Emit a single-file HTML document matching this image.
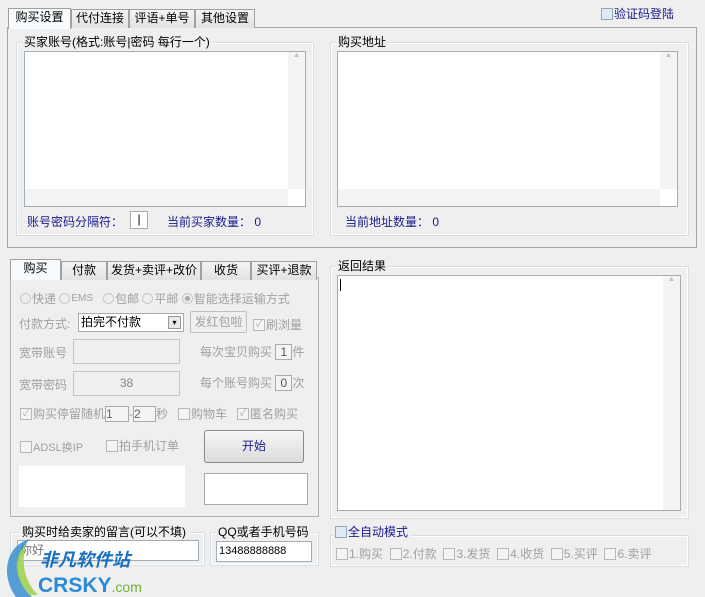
<!DOCTYPE html>
<html><head><meta charset="utf-8"><style>
*{box-sizing:border-box;margin:0;padding:0}
body{width:705px;height:597px;background:#efefef;font-family:"Liberation Sans","Noto Sans CJK SC","WenQuanYi Zen Hei",sans-serif;font-size:12px;color:#000;position:relative;overflow:hidden}
.a{position:absolute;white-space:nowrap}
.tab{position:absolute;height:19px;border:1px solid #a0a0a0;border-bottom:none;background:linear-gradient(#f4f4f4,#e2e2e2);text-align:center;line-height:17px;font-size:12px}
.tab.sel{background:#f8fbfd;height:21px}
.pan{position:absolute;border:1px solid #a4a4a4;background:#efefef}
.grp{position:absolute;border:1px solid #d5dfe5;box-shadow:inset 0 0 0 1px #fff}
.lg{position:absolute;background:#efefef;padding:0 2px;line-height:12px}
.ta{position:absolute;background:#fff;border:1px solid #a5acb5}
.vs{position:absolute;right:0;top:0;width:17px;background:#f4f4f4;color:#bbb;font-size:7px;text-align:center}
.hs{position:absolute;left:0;bottom:0;height:17px;background:#f4f4f4;color:#bbb;font-size:7px}
.box{position:absolute;background:#fff;border:1px solid #a5acb5}
.dis{position:absolute;background:#efefef;border:1px solid #c0c6cc}
.g{color:#a0a0a0}
.b{color:#1a1a8c}
.row{display:flex;align-items:center}
.cb{display:inline-block;width:12px;height:12px;border:1px solid #b8b8b8;background:#f4f4f4;margin-right:1px;font-size:10px;line-height:10px;text-align:center;color:#b0b0b0;flex:none}
.rd{display:inline-block;width:11px;height:11px;border:1px solid #c8c8c8;border-radius:50%;background:#eee;margin-right:1px;flex:none}
</style></head><body>

<div class="pan" style="left:7px;top:27px;width:690px;height:221px"></div>
<div class="tab" style="left:71px;top:9px;width:58px">代付连接</div>
<div class="tab" style="left:129px;top:9px;width:66px">评语+单号</div>
<div class="tab" style="left:195px;top:9px;width:60px">其他设置</div>
<div class="tab sel" style="left:8px;top:8px;width:63px">购买设置</div>

<div class="a row" style="left:601px;top:5px"><span class="cb" style="border-color:#8ea8c0;background:#dfe9f3"></span><span class="b">验证码登陆</span></div>

<div class="grp" style="left:16px;top:42px;width:298px;height:194px"></div>
<div class="lg" style="left:22px;top:36px">买家账号(格式:账号|密码 每行一个)</div>
<div class="ta" style="left:24px;top:51px;width:282px;height:156px"><div class="vs" style="height:137px">▲</div><div class="hs" style="width:263px"></div></div>
<div class="a b" style="left:27px;top:213px">账号密码分隔符：</div>
<div class="box" style="left:130px;top:211px;width:18px;height:18px;text-align:center;line-height:15px">|</div>
<div class="a b" style="left:167px;top:213px">当前买家数量： 0</div>

<div class="grp" style="left:330px;top:42px;width:359px;height:194px"></div>
<div class="lg" style="left:336px;top:36px">购买地址</div>
<div class="ta" style="left:337px;top:51px;width:341px;height:156px"><div class="vs" style="height:137px">▲</div><div class="hs" style="width:322px"></div></div>
<div class="a b" style="left:345px;top:213px">当前地址数量： 0</div>

<!-- lower left -->
<div class="pan" style="left:10px;top:277px;width:309px;height:240px;border-color:#b0b0b0"></div>
<div class="tab" style="left:61px;top:261px;width:46px">付款</div>
<div class="tab" style="left:107px;top:261px;width:94px">发货+卖评+改价</div>
<div class="tab" style="left:201px;top:261px;width:50px">收货</div>
<div class="tab" style="left:251px;top:261px;width:66px">买评+退款</div>
<div class="tab sel" style="left:10px;top:259px;width:51px">购买</div>

<div class="a g row" style="left:20px;top:290px"><span class="rd"></span>快递&nbsp;<span class="rd"></span><span style="font-size:10px">EMS</span>&nbsp;&nbsp;&nbsp;<span class="rd"></span>包邮&nbsp;<span class="rd"></span>平邮&nbsp;<span class="rd" style="background:radial-gradient(#aaa 35%,#eee 45%)"></span>智能选择运输方式</div>
<div class="a g" style="left:19px;top:315px">付款方式:</div>
<div class="box" style="left:78px;top:313px;width:106px;height:19px;padding-left:2px;line-height:16px">拍完不付款<div style="position:absolute;right:2px;top:2px;width:13px;height:13px;border:1px solid #999;background:#e8e8e8;font-size:8px;text-align:center;line-height:11px">▾</div></div>
<div class="a g" style="left:190px;top:311px;width:57px;height:22px;border:1px solid #c0c0c0;border-radius:2px;text-align:center;line-height:20px">发红包啦</div>
<div class="a g row" style="left:253px;top:316px"><span class="cb">✓</span>刷浏量</div>
<div class="a g" style="left:19px;top:344px">宽带账号</div>
<div class="dis" style="left:73px;top:339px;width:107px;height:25px"></div>
<div class="a g" style="left:200px;top:343px">每次宝贝购买 <span style="display:inline-block;border:1px solid #aaa;width:17px;text-align:center;color:#555;background:#f4f4f4">1</span>件</div>
<div class="a g" style="left:19px;top:376px">宽带密码</div>
<div class="dis" style="left:73px;top:371px;width:107px;height:25px;text-align:center;line-height:22px;color:#888">38</div>
<div class="a g" style="left:200px;top:374px">每个账号购买 <span style="display:inline-block;border:1px solid #aaa;width:17px;text-align:center;color:#555;background:#f4f4f4">0</span>次</div>
<div class="a g row" style="left:20px;top:405px"><span class="cb">✓</span>购买停留随机<span style="display:inline-block;border:1px solid #aaa;width:24px;background:#f4f4f4;color:#666">1</span>-<span style="display:inline-block;border:1px solid #aaa;width:23px;background:#f4f4f4;color:#666">2</span>秒&nbsp;&nbsp;&nbsp;<span class="cb"></span>购物车&nbsp;&nbsp;&nbsp;<span class="cb">✓</span>匿名购买</div>
<div class="a g row" style="left:20px;top:439px"><span class="cb"></span><span style="font-size:11px">ADSL换IP</span></div>
<div class="a g row" style="left:106px;top:437px"><span class="cb"></span>拍手机订单</div>
<div class="a b" style="left:204px;top:430px;width:100px;height:33px;border:1px solid #8a8a8a;border-radius:3px;background:linear-gradient(#f6f6f6,#dcdcdc);text-align:center;line-height:30px">开始</div>
<div class="a" style="left:19px;top:466px;width:166px;height:41px;background:#fff"></div>
<div class="box" style="left:204px;top:473px;width:104px;height:32px"></div>

<!-- return -->
<div class="grp" style="left:330px;top:266px;width:359px;height:253px"></div>
<div class="lg" style="left:336px;top:260px">返回结果</div>
<div class="ta" style="left:337px;top:275px;width:344px;height:236px"><div class="vs" style="height:234px">▲</div><div style="position:absolute;left:2px;top:3px;width:1px;height:12px;background:#000"></div></div>

<!-- bottom -->
<div class="grp" style="left:10px;top:532px;width:195px;height:34px"></div>
<div class="lg" style="left:20px;top:526px">购买时给卖家的留言(可以不填)</div>
<div class="box" style="left:17px;top:540px;width:182px;height:21px;padding-left:2px;line-height:18px;color:#777">你好</div>
<div class="grp" style="left:210px;top:532px;width:109px;height:34px"></div>
<div class="lg" style="left:216px;top:526px">QQ或者手机号码</div>
<div class="box" style="left:216px;top:541px;width:96px;height:21px;padding-left:2px;line-height:18px;font-size:11px">13488888888</div>
<div class="grp" style="left:330px;top:535px;width:359px;height:32px"></div>
<div class="lg row" style="left:333px;top:526px"><span class="cb" style="border-color:#8ea8c0;background:#dfe9f3"></span><span class="b">全自动模式</span></div>
<div class="a g row" style="left:336px;top:545px"><span class="cb"></span>1.购买&nbsp;&nbsp;<span class="cb"></span>2.付款&nbsp;&nbsp;<span class="cb"></span>3.发货&nbsp;&nbsp;<span class="cb"></span>4.收货&nbsp;&nbsp;<span class="cb"></span>5.买评&nbsp;&nbsp;<span class="cb"></span>6.卖评</div>

<!-- logo -->
<svg class="a" style="left:0;top:537px" width="160" height="60" viewBox="0 0 160 60">
<path d="M30 2 C6 8 0 38 16 60 L32 60 C14 44 14 18 30 2Z" fill="#3a8fd0" opacity=".85"/>
<path d="M26 8 C12 20 14 42 30 58 L38 58 C22 42 22 22 26 8Z" fill="#9fd04a" opacity=".85"/>
<text x="40" y="29" font-family="Liberation Sans,Noto Sans CJK SC,sans-serif" font-size="18" font-weight="bold" font-style="italic" fill="#1a6fc0">非凡软件站</text>
<text x="38" y="55" font-family="Liberation Sans,sans-serif" font-size="21" font-weight="bold" fill="#2b8ad6">CRSKY<tspan font-size="14" font-weight="normal" fill="#6cb23a">.com</tspan></text>
</svg>
</body></html>
